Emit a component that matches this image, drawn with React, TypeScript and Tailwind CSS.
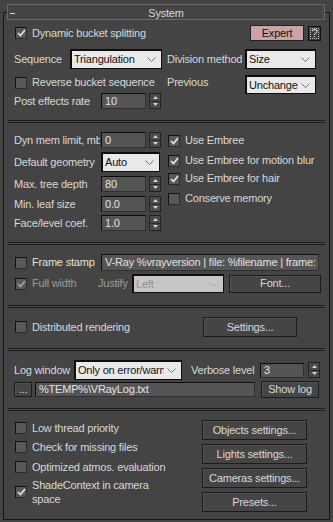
import React from 'react';

// V-Ray "System" rollout, 3ds Max dark theme

const Check: React.FC<{ checked?: boolean; dim?: boolean }> = ({ checked, dim }) => (
  <span className="flex h-[12px] w-[12px] shrink-0 items-center justify-center border border-t-[#111] border-l-[#111] border-b-[#2c2c2c] border-r-[#2c2c2c] bg-[#585858]">
    {checked && (
      <svg width="9" height="8" viewBox="0 0 9 8">
        <polyline
          points="1,4 3.5,6.5 8,1"
          fill="none"
          stroke={dim ? '#a4a4a4' : '#e4e4e4'}
          strokeWidth="1.7"
        />
      </svg>
    )}
  </span>
);

const Spin: React.FC = () => (
  <span className="flex h-[16px] w-[12px] shrink-0 flex-col border border-[#222] bg-[#4a4a4a]">
    <span className="flex flex-1 items-center justify-center border-b border-[#2a2a2a]">
      <svg width="5" height="3" viewBox="0 0 5 3">
        <polygon points="0,3 2.5,0 5,3" fill="#d4d4d4" />
      </svg>
    </span>
    <span className="flex flex-1 items-center justify-center">
      <svg width="5" height="3" viewBox="0 0 5 3">
        <polygon points="0,0 2.5,3 5,0" fill="#d4d4d4" />
      </svg>
    </span>
  </span>
);

const Field: React.FC<{ value: string; className?: string }> = ({ value, className = '' }) => (
  <div
    className={`flex shrink-0 items-center overflow-hidden whitespace-nowrap border border-t-[#0c0c0c] border-l-[#0c0c0c] border-b-[#303030] border-r-[#303030] bg-[#555555] pl-[3px] text-[#e2e2e2] ${className}`}
  >
    {value}
  </div>
);

const Select: React.FC<{ value: string; className?: string; disabled?: boolean }> = ({
  value,
  className = '',
  disabled,
}) => (
  <div
    className={`flex shrink-0 items-center border border-t-2 border-l-2 border-[#0e0e0e] pl-[2px] pr-[5px] ${
      disabled ? 'bg-[#c6c6c6] text-[#909090]' : 'bg-[#e9e9e9] text-[#111]'
    } ${className}`}
  >
    <span className="flex-1 overflow-hidden whitespace-nowrap">{value}</span>
    <svg width="9" height="5" viewBox="0 0 9 5" className="ml-[3px] shrink-0">
      <polyline
        points="0.5,0.5 4.5,4.5 8.5,0.5"
        fill="none"
        stroke={disabled ? '#a6a6a6' : '#707070'}
        strokeWidth="1"
      />
    </svg>
  </div>
);

const Btn: React.FC<{ children: React.ReactNode; className?: string }> = ({
  children,
  className = '',
}) => (
  <div
    className={`flex shrink-0 items-center justify-center border border-[#1c1c1c] bg-[#454545] text-[#dadada] shadow-[inset_1px_1px_0_#525252] ${className}`}
  >
    {children}
  </div>
);

const Divider: React.FC = () => (
  <div className="mx-[4px] h-[3px] border-y border-[#1a1a1a] bg-[#4f4f4f]" />
);

export default function App() {
  return (
    <div className="h-[522px] w-[333px] overflow-hidden bg-[#444444] px-[3px] pt-[12px] font-['Liberation_Sans','Arial',sans-serif] text-[11px] tracking-[-0.2px] text-[#d8d8d8]">
      <div className="flex h-[508px] flex-col border border-[#161616]">
        {/* Rollout header */}
        <div className="-mt-[9px] ml-[3px] mr-[4px] grid h-[16px] grid-cols-[12px_1fr_12px] items-center border border-[#686868] bg-[#454545]">
          <span className="ml-[2px] h-px w-[5px] bg-[#dcdcdc]" />
          <span className="text-center">System</span>
          <span />
        </div>

        {/* Buckets */}
        <div className="flex h-[100px] flex-col pl-[10px] pr-[8px]">
          <div className="mt-[5px] flex h-[16px] items-center">
            <span className="ml-px">
              <Check checked />
            </span>
            <span className="ml-[5px]">Dynamic bucket splitting</span>
            <div className="ml-auto flex h-[16px] w-[54px] items-center justify-center border border-[#2a2020] bg-[#c9a3a5] text-[#141414]">
              Expert
            </div>
            <div className="ml-[4px] flex h-[15px] w-[13px] items-center justify-center border border-[#111] bg-[#3c3c3c]">
              <span className="flex h-[11px] w-[9px] items-center justify-center border border-dotted border-[#bdbdbd] leading-none text-[#e0e0e0]">
                ?
              </span>
            </div>
          </div>
          <div className="mt-[8px] flex h-[20px] items-center">
            <span className="w-[56px]">Sequence</span>
            <Select className="h-[20px] w-[92px]" value="Triangulation" />
            <span className="ml-[5px] w-[78px] whitespace-nowrap">Division method</span>
            <Select className="h-[20px] w-[71px]" value="Size" />
          </div>
          <div className="mt-[6px] flex h-[18px] items-start">
            <div className="mt-px flex h-[13px] w-[153px] items-center">
              <span className="ml-px">
                <Check />
              </span>
              <span className="ml-[5px] whitespace-nowrap">Reverse bucket sequence</span>
            </div>
            <span className="mt-px w-[78px] leading-[13px]">Previous</span>
            <Select className="h-[19px] w-[71px]" value="Unchange" />
          </div>
          <div className="flex h-[16px] items-center">
            <span className="w-[87px]">Post effects rate</span>
            <Field className="h-[16px] w-[45px]" value="10" />
            <span className="ml-[3px]">
              <Spin />
            </span>
          </div>
        </div>

        <Divider />

        {/* Raycaster */}
        <div className="flex h-[119px] pl-[10px]">
          <div className="flex w-[154px] shrink-0 flex-col">
            <div className="mt-[9px] flex h-[16px] items-center">
              <span className="w-[86px] overflow-hidden whitespace-nowrap">Dyn mem limit, mb</span>
              <Field className="ml-px h-[16px] w-[45px]" value="0" />
              <span className="ml-[3px]">
                <Spin />
              </span>
            </div>
            <div className="mt-[4px] flex h-[20px] items-center">
              <span className="w-[87px]">Default geometry</span>
              <Select className="h-[20px] w-[59px]" value="Auto" />
            </div>
            <div className="mt-[4px] flex h-[16px] items-center">
              <span className="w-[87px]">Max. tree depth</span>
              <Field className="h-[16px] w-[45px]" value="80" />
              <span className="ml-[3px]">
                <Spin />
              </span>
            </div>
            <div className="mt-[4px] flex h-[16px] items-center">
              <span className="w-[87px]">Min. leaf size</span>
              <Field className="h-[16px] w-[45px]" value="0.0" />
              <span className="ml-[3px]">
                <Spin />
              </span>
            </div>
            <div className="mt-[3px] flex h-[16px] items-center">
              <span className="w-[87px]">Face/level coef.</span>
              <Field className="h-[16px] w-[45px]" value="1.0" />
              <span className="ml-[3px]">
                <Spin />
              </span>
            </div>
          </div>
          <div className="flex flex-col">
            <div className="mt-[11px] flex h-[13px] items-center">
              <Check checked />
              <span className="ml-[5px]">Use Embree</span>
            </div>
            <div className="mt-[7px] flex h-[13px] items-center">
              <Check checked />
              <span className="ml-[5px] whitespace-nowrap">Use Embree for motion blur</span>
            </div>
            <div className="mt-[5px] flex h-[13px] items-center">
              <Check checked />
              <span className="ml-[5px]">Use Embree for hair</span>
            </div>
            <div className="mt-[7px] flex h-[13px] items-center">
              <Check />
              <span className="ml-[5px]">Conserve memory</span>
            </div>
          </div>
        </div>

        <Divider />

        {/* Frame stamp */}
        <div className="flex h-[60px] flex-col pl-[10px]">
          <div className="mt-[9px] flex h-[17px] items-center">
            <div className="flex w-[87px] items-center">
              <span className="ml-px">
                <Check />
              </span>
              <span className="ml-[5px] text-[#ebe3cc]">Frame stamp</span>
            </div>
            <Field
              className="h-[17px] w-[218px]"
              value="V-Ray %vrayversion | file: %filename | frame: %frame | primitives: %primitives | render time: %rendertime"
            />
          </div>
          <div className="mt-[3px] flex h-[19px] items-center">
            <div className="flex w-[84px] items-center">
              <span className="ml-px">
                <Check checked dim />
              </span>
              <span className="ml-[5px] text-[#9c9c9c]">Full width</span>
            </div>
            <span className="w-[34px] text-[#9c9c9c]">Justify</span>
            <Select disabled className="h-[19px] w-[92px]" value="Left" />
            <Btn className="ml-[5px] h-[18px] w-[92px]">Font...</Btn>
          </div>
        </div>

        <Divider />

        {/* Distributed rendering */}
        <div className="flex h-[40px] flex-col pl-[10px]">
          <div className="mt-[9px] flex h-[20px] items-center">
            <div className="flex w-[189px] items-center">
              <span className="ml-px">
                <Check />
              </span>
              <span className="ml-[5px]">Distributed rendering</span>
            </div>
            <Btn className="h-[20px] w-[94px]">Settings...</Btn>
          </div>
        </div>

        <Divider />

        {/* Log */}
        <div className="flex h-[57px] flex-col pl-[10px]">
          <div className="mt-[9px] flex h-[20px] items-center">
            <span className="w-[60px] whitespace-nowrap">Log window</span>
            <Select className="h-[20px] w-[108px]" value="Only on error/warning" />
            <span className="ml-[9px] w-[69px] whitespace-nowrap">Verbose level</span>
            <Field className="h-[15px] w-[44px]" value="3" />
            <span className="ml-[4px]">
              <Spin />
            </span>
          </div>
          <div className="mt-px flex h-[17px] items-center">
            <Btn className="h-[15px] w-[18px]">...</Btn>
            <Field className="ml-[3px] h-[15px] w-[220px]" value={'%TEMP%\\VRayLog.txt'} />
            <Btn className="ml-[6px] h-[17px] w-[58px]">Show log</Btn>
          </div>
        </div>

        <Divider />

        {/* Misc */}
        <div className="flex flex-1 pl-[10px]">
          <div className="flex w-[188px] shrink-0 flex-col">
            <div className="mt-[11px] flex h-[12px] items-center">
              <span className="ml-px">
                <Check />
              </span>
              <span className="ml-[5px]">Low thread priority</span>
            </div>
            <div className="mt-[7px] flex h-[12px] items-center">
              <span className="ml-px">
                <Check />
              </span>
              <span className="ml-[5px]">Check for missing files</span>
            </div>
            <div className="mt-[8px] flex h-[12px] items-center">
              <span className="ml-px">
                <Check />
              </span>
              <span className="ml-[5px] w-[134px] overflow-hidden whitespace-nowrap">
                Optimized atmos. evaluation
              </span>
            </div>
            <div className="mt-[5px] flex items-center">
              <span className="ml-px">
                <Check checked />
              </span>
              <span className="ml-[5px] w-[134px] leading-[14px]">ShadeContext in camera space</span>
            </div>
          </div>
          <div className="mt-[9px] flex flex-col gap-[4px]">
            <Btn className="h-[20px] w-[105px]">Objects settings...</Btn>
            <Btn className="h-[20px] w-[105px]">Lights settings...</Btn>
            <Btn className="h-[20px] w-[105px]">Cameras settings...</Btn>
            <Btn className="h-[20px] w-[105px]">Presets...</Btn>
          </div>
        </div>
      </div>
    </div>
  );
}
